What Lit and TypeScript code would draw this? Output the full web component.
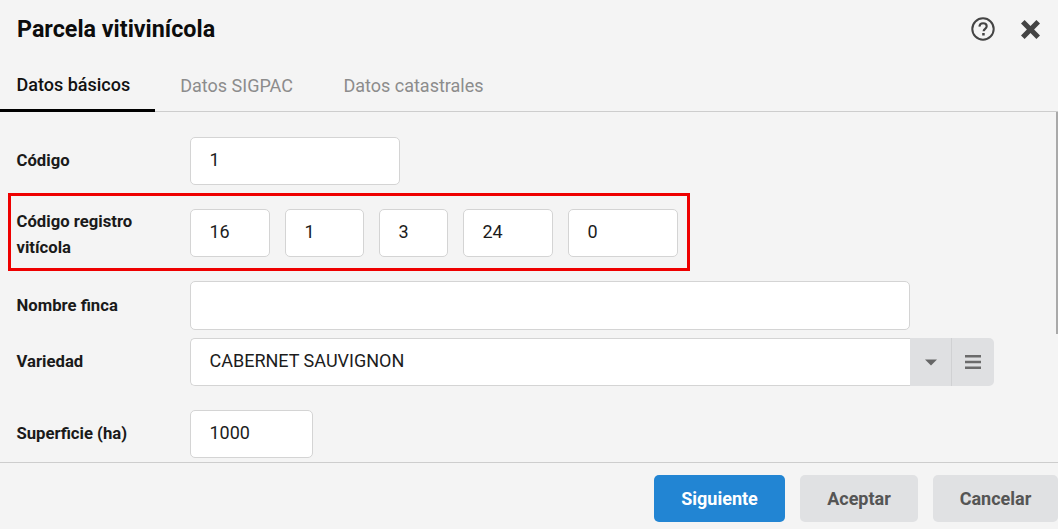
import { LitElement, html, css } from "lit";
import { customElement } from "lit/decorators.js";

@customElement("app-root")
export class AppRoot extends LitElement {
  static styles = css`
    :host { display: flex; flex-direction: column; width: 1058px; height: 529px; background: #f4f4f4; overflow: hidden; font-family: Roboto, sans-serif; color: #111; position: relative; }
    .head { height: 60px; display: flex; align-items: center; padding: 0 18px 2px 17px; box-sizing: border-box; flex: none; }
    .title { font-size: 23.3px; font-weight: 700; flex: 1; color: #0c0c0c; }
    .icons { display: flex; align-items: center; gap: 26px; }
    .icons svg { display: block; }
    .tabs { flex: none; display: flex; border-bottom: 1px solid #cdcdcd; box-sizing: content-box; height: 51px; }
    .tab { font-size: 18px; color: #8c8c8c; padding: 0 25px 0 25.5px; display: flex; align-items: center; box-sizing: border-box; height: 51px; }
    .tab.active { color: #111; font-weight: 500; padding: 0 24.5px 0 16.5px; border-bottom: 3px solid #000; margin-bottom: -1px; height: 52px; }
    .body { flex: 1; min-height: 0; overflow: hidden; padding: 25px 0 0 16px; box-sizing: border-box; }
    .row { display: flex; align-items: center; margin-bottom: 8px; }
    .row .label { padding-bottom: 1px; }
    .row.tall .label { padding-bottom: 0; }
    .row.tall .input { height: 49px; width: 720px; }
    .label { width: 174px; flex: none; font-size: 16.7px; font-weight: 700; line-height: 26px; color: #1a1a1a; box-sizing: border-box; padding-left: 0.5px; }
    .input { height: 48px; box-sizing: border-box; background: #fff; border: 1px solid #d4d4d4; border-radius: 5px; font-size: 18px; padding: 0 0 2px 18.5px; display: flex; align-items: center; color: #1c1c1c; }
    .row .input { padding-bottom: 4px; }
    .redbox { display: flex; align-items: center; border: 3px solid #ee0000; width: 682px; height: 78px; box-sizing: border-box; margin: 0 0 10px -8px; padding: 1px 0 0 5px; }
    .redbox .label { padding-top: 4px; }
    .group { display: flex; gap: 15px; }
    .combo { display: flex; width: 804px; height: 48px; }
    .combo .input { width: 720px; border-radius: 5px 0 0 5px; border-right: none; }
    .addon { background: #dfe0e2; display: flex; align-items: center; justify-content: center; }
    .caret { width: 41px; border-right: 1px solid #d0d1d3; }
    .menu { width: 42px; border-radius: 0 5px 5px 0; }
    .foot { height: 67px; flex: none; border-top: 1px solid #cdcdcd; display: flex; justify-content: flex-end; gap: 15px; padding-top: 12px; box-sizing: border-box; }
    .btn { height: 47px; border-radius: 5px; font-size: 18px; font-weight: 700; display: flex; align-items: center; justify-content: center; background: #e0e1e3; color: #555; box-sizing: border-box; }
    .primary { background: #2285d3; color: #fff; }
    .thumb { position: absolute; right: 0; top: 112px; width: 2px; height: 222px; background: #a9a9a9; }
  `;

  render() {
    return html`
      <div class="head">
        <div class="title">Parcela vitivinícola</div>
        <div class="icons">
          <svg width="24" height="24" viewBox="0 0 24 24" fill="none">
            <circle cx="12" cy="12" r="10.7" stroke="#444" stroke-width="2"/>
            <path d="M8.4 9.6c.2-2.2 1.7-3.4 3.7-3.4s3.6 1.2 3.6 3.1c0 2.5-3.1 2.6-3.1 5" stroke="#444" stroke-width="2.1"/>
            <rect x="11.2" y="16" width="2.5" height="2.5" fill="#444"/>
          </svg>
          <svg width="19" height="19" viewBox="0 0 19 19">
            <path d="M3.6 0 9.5 5.9 15.4 0 19 3.6 13.1 9.5 19 15.4 15.4 19 9.5 13.1 3.6 19 0 15.4 5.9 9.5 0 3.6z" fill="#444"/>
          </svg>
        </div>
      </div>
      <div class="tabs">
        <div class="tab active">Datos básicos</div>
        <div class="tab">Datos SIGPAC</div>
        <div class="tab">Datos catastrales</div>
      </div>
      <div class="body">
        <div class="row">
          <div class="label">Código</div>
          <div class="input" style="width:210px">1</div>
        </div>
        <div class="redbox">
          <div class="label">Código registro<br />vitícola</div>
          <div class="group">
            <div class="input" style="width:80px">16</div>
            <div class="input" style="width:79px">1</div>
            <div class="input" style="width:69px">3</div>
            <div class="input" style="width:90px">24</div>
            <div class="input" style="width:110px">0</div>
          </div>
        </div>
        <div class="row tall">
          <div class="label">Nombre finca</div>
          <div class="input"></div>
        </div>
        <div class="row" style="margin-bottom:24px">
          <div class="label">Variedad</div>
          <div class="combo">
            <div class="input">CABERNET SAUVIGNON</div>
            <div class="addon caret">
              <svg width="12" height="7" viewBox="0 0 12 7"><path d="M0 .5h12L6 6.5z" fill="#666"/></svg>
            </div>
            <div class="addon menu">
              <svg width="16" height="14" viewBox="0 0 16 14"><path d="M0 0h16v2.4H0zM0 5.8h16v2.4H0zM0 11.6h16V14H0z" fill="#6b6b6b"/></svg>
            </div>
          </div>
        </div>
        <div class="row">
          <div class="label">Superficie (ha)</div>
          <div class="input" style="width:123px">1000</div>
        </div>
      </div>
      <div class="foot">
        <div class="btn primary" style="width:131px">Siguiente</div>
        <div class="btn" style="width:118px">Aceptar</div>
        <div class="btn" style="width:125px">Cancelar</div>
      </div>
      <div class="thumb"></div>
    `;
  }
}
